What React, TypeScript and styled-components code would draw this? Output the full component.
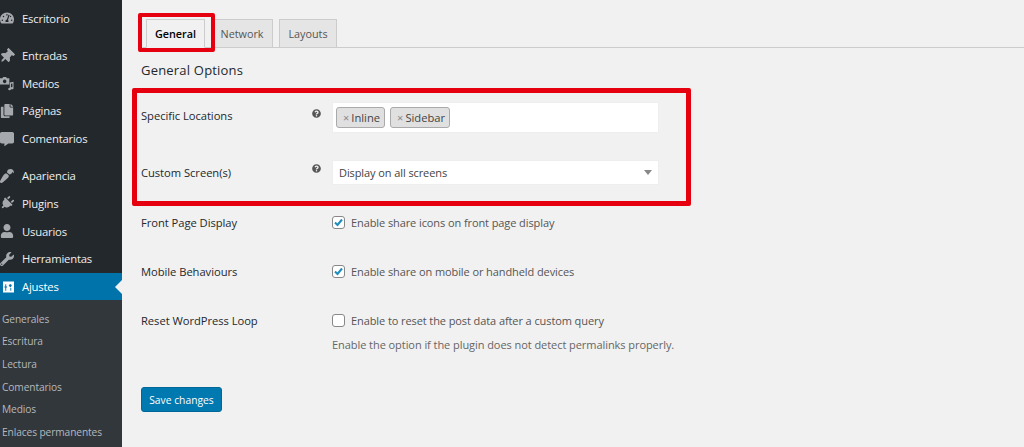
import React from "react";
import styled, { createGlobalStyle } from "styled-components";
import {
  FaTachometerAlt,
  FaThumbtack,
  FaCopy,
  FaCommentAlt,
  FaPaintBrush,
  FaPlug,
  FaUser,
  FaWrench,
  FaQuestionCircle,
} from "react-icons/fa";

const GlobalStyle = createGlobalStyle`
  html, body {
    margin: 0;
    padding: 0;
    height: 100%;
    overflow: hidden;
    background: #f1f1f1;
    font-family: "Open Sans", "Noto Sans", "Liberation Sans", sans-serif;
  }
`;

const Page = styled.div`
  display: flex;
  width: 1024px;
  height: 447px;
  overflow: hidden;
`;

const Sidebar = styled.nav`
  width: 122px;
  flex: none;
  background: #23282d;
  padding-top: 4.5px;
  box-sizing: border-box;
`;

const MenuGroup = styled.div`
  margin-bottom: 9.5px;
`;

const MenuItem = styled.div<{ $active?: boolean }>`
  position: relative;
  display: flex;
  align-items: center;
  height: 27.7px;
  padding-left: 22px;
  font-size: 11.3px;
  letter-spacing: -0.2px;
  color: ${(p) => (p.$active ? "#ffffff" : "#eeeeee")};
  background: ${(p) => (p.$active ? "#0073aa" : "transparent")};

  ${(p) =>
    p.$active &&
    `
    &::after {
      content: "";
      position: absolute;
      right: 0;
      top: 50%;
      margin-top: -7px;
      border: 7px solid transparent;
      border-right-color: #f1f1f1;
      border-left-width: 0;
    }
  `}
`;

const IconSlot = styled.span<{ $active?: boolean; $turn?: number; $size?: number }>`
  position: absolute;
  left: 0;
  top: 50%;
  width: 14px;
  height: 14px;
  margin-top: -7px;
  display: flex;
  align-items: center;
  justify-content: center;
  font-size: ${(p) => p.$size ?? 14}px;
  color: ${(p) => (p.$active ? "#ffffff" : "#a5a9ad")};
  transform: rotate(${(p) => p.$turn ?? 0}deg);
`;

const SubMenu = styled.div`
  background: #32373c;
  margin-top: 0;
  padding-top: 7px;
  height: 160px;
`;

const SubItem = styled.div`
  height: 22.7px;
  display: flex;
  align-items: center;
  padding-left: 2px;
  font-size: 10.2px;
  letter-spacing: -0.1px;
  color: #b4b9be;
`;

const Main = styled.main`
  flex: 1;
  padding: 18px 0 0 19px;
  color: #23282d;
  font-size: 11px;
`;

const TabBar = styled.div`
  position: relative;
  display: flex;
  align-items: flex-end;
  gap: 6px;
  height: 29px;
  padding-left: 5px;
  border-bottom: 1px solid #ccc;
`;

const Tab = styled.div<{ $active?: boolean; $width: number }>`
  height: 29px;
  margin-bottom: -1px;
  width: ${(p) => p.$width}px;
  box-sizing: border-box;
  display: flex;
  align-items: center;
  justify-content: center;
  font-size: 10.8px;
  font-weight: ${(p) => (p.$active ? 600 : 500)};
  color: ${(p) => (p.$active ? "#000" : "#555")};
  background: ${(p) => (p.$active ? "#f1f1f1" : "#e5e5e5")};
  border: 1px solid #ccc;
  border-bottom-color: ${(p) => (p.$active ? "#f1f1f1" : "#ccc")};
`;

const TabHighlight = styled.div`
  position: absolute;
  z-index: 1;
  left: -3px;
  top: -5px;
  width: 77px;
  height: 39px;
  box-sizing: border-box;
  border: 4px solid #e6000f;
  border-radius: 2px;
  pointer-events: none;
`;

const SectionHighlight = styled.div`
  position: absolute;
  inset: -14px -32px -21px -9px;
  border: 5px solid #e6000f;
  border-radius: 2px;
  pointer-events: none;
`;

const Heading = styled.h2`
  margin: 12.5px 0 0;
  height: 18px;
  line-height: 18px;
  font-size: 13px;
  font-weight: 500;
  letter-spacing: 0.2px;
  color: #23282d;
`;

const Highlighted = styled.section`
  position: relative;
  margin-top: 23.5px;
  width: 518px;
`;

const Row = styled.div<{ $height: number; $top?: number }>`
  display: grid;
  grid-template-columns: 171px 20px 327px;
  align-items: center;
  height: ${(p) => p.$height}px;
  margin-top: ${(p) => p.$top ?? 0}px;
`;

const Label = styled.div<{ $raised?: boolean }>`
  font-size: 11.2px;
  font-weight: 500;
  letter-spacing: -0.04px;
  color: #23282d;
  margin-top: ${(p) => (p.$raised ? "-5px" : "0")};
`;

const Help = styled.span`
  display: flex;
  font-size: 9px;
  color: #555;
  margin: -8px 0 0 0;
`;

const TagInput = styled.div`
  grid-column: 3;
  height: 31px;
  box-sizing: border-box;
  display: flex;
  align-items: center;
  gap: 5px;
  padding: 0 3px;
  background: #fff;
  border: 1px solid #eee;
`;

const Tag = styled.span`
  height: 21px;
  box-sizing: border-box;
  display: flex;
  align-items: center;
  padding: 0 4px 0 6px;
  gap: 2px;
  background: #e0e0e0;
  border: 1px solid #aaa;
  border-radius: 3px;
  font-size: 11.2px;
  color: #444;
`;

const TagX = styled.span`
  color: #888;
  font-size: 11px;
`;

const Select = styled.div`
  grid-column: 3;
  height: 25px;
  box-sizing: border-box;
  display: flex;
  align-items: center;
  justify-content: space-between;
  padding: 0 6px;
  background: #fff;
  border: 1px solid #eee;
  font-size: 11px;
  letter-spacing: -0.09px;
  color: #444;
`;

const Caret = styled.span`
  width: 0;
  height: 0;
  border: 4px solid transparent;
  border-top: 5px solid #888;
  border-bottom: 0;
`;

const CheckField = styled.div`
  grid-column: 3;
  display: flex;
  align-items: center;
  gap: 6px;
  font-size: 11px;
  letter-spacing: -0.09px;
  color: #555;
`;

const CheckBox = styled.span`
  width: 13px;
  height: 13px;
  box-sizing: border-box;
  flex: none;
  display: flex;
  align-items: center;
  justify-content: center;
  background: #fff;
  border: 1px solid #888;
  border-radius: 3px;
`;

const Description = styled.p`
  margin: 8px 0 0 191px;
  font-size: 11px;
  letter-spacing: -0.06px;
  line-height: 15px;
  color: #666;
`;

const SaveButton = styled.button`
  display: block;
  width: 81px;
  height: 25px;
  margin-top: 35px;
  padding: 0;
  background: #0078b0;
  border: 1px solid #006799;
  border-radius: 3px;
  color: #fff;
  font-family: inherit;
  font-size: 10.3px;
  font-weight: 500;
`;

const MediaIcon = () => (
  <svg width="16" height="15" viewBox="0 0 15 14" fill="currentColor">
    <path fillRule="evenodd" d="M0 1.500h2.500L3.500 0h3l1 1.500H10V8H0z M5 2.800a1.900 1.900 0 1 0 .01 0z" />
    <path d="M10.500 6l4-1v7a1.500 1.300 0 1 1-1.200-1.300V7l-1.500.4V13a1.500 1.300 0 1 1-1.300-1.300z" />
  </svg>
);

const SettingsIcon = () => (
  <svg width="12" height="12" viewBox="0 0 12 12" fill="currentColor" style={{ marginLeft: 3 }}>
    <path
      fillRule="evenodd"
      d="M0 0h12v12H0z M1.500 6.500h1V10h1V6.500h1v-1h-1V3h-1v2.500h-1z M7 3v1H6l2 2.500L10 4H9V3z M8 7v3h1V7z"
    />
  </svg>
);

const Check = () => (
  <svg width="11" height="11" viewBox="0 0 11 11">
    <path d="M2 5.500l2.500 2.500L9 2.500" fill="none" stroke="#1e8cbe" strokeWidth="2" />
  </svg>
);

function Item({ icon, label, turn, size, active }: any) {
  return (
    <MenuItem $active={active}>
      <IconSlot $active={active} $turn={turn} $size={size}>
        {icon}
      </IconSlot>
      {label}
    </MenuItem>
  );
}

export default function App() {
  return (
    <Page>
      <GlobalStyle />
      <Sidebar>
        <MenuGroup>
          <Item icon={<FaTachometerAlt />} label="Escritorio" />
        </MenuGroup>
        <MenuGroup>
          <Item icon={<FaThumbtack />} label="Entradas" turn={45} size={15} />
          <Item icon={<MediaIcon />} label="Medios" />
          <Item icon={<FaCopy />} label="Páginas" />
          <Item icon={<FaCommentAlt />} label="Comentarios" />
        </MenuGroup>
        <Item icon={<FaPaintBrush />} label="Apariencia" turn={180} />
        <Item icon={<FaPlug />} label="Plugins" turn={45} />
        <Item icon={<FaUser />} label="Usuarios" />
        <Item icon={<FaWrench />} label="Herramientas" />
        <Item icon={<SettingsIcon />} label="Ajustes" active />
        <SubMenu>
          {["Generales", "Escritura", "Lectura", "Comentarios", "Medios", "Enlaces permanentes"].map((s) => (
            <SubItem key={s}>{s}</SubItem>
          ))}
        </SubMenu>
      </Sidebar>
      <Main>
        <TabBar>
          <Tab $active $width={59}>
            General
          </Tab>
          <Tab $width={62}>Network</Tab>
          <Tab $width={58}>Layouts</Tab>
          <TabHighlight />
        </TabBar>
        <Heading>General Options</Heading>
        <Highlighted>
          <SectionHighlight />
          <Row $height={31}>
            <Label $raised>Specific Locations</Label>
            <Help>
              <FaQuestionCircle />
            </Help>
            <TagInput>
              <Tag>
                <TagX>×</TagX>Inline
              </Tag>
              <Tag>
                <TagX>×</TagX>Sidebar
              </Tag>
            </TagInput>
          </Row>
          <Row $height={25} $top={27}>
            <Label>Custom Screen(s)</Label>
            <Help>
              <FaQuestionCircle />
            </Help>
            <Select>
              Display on all screens
              <Caret />
            </Select>
          </Row>
        </Highlighted>
        <Row $height={18} $top={28}>
          <Label>Front Page Display</Label>
          <span />
          <CheckField>
            <CheckBox>
              <Check />
            </CheckBox>
            Enable share icons on front page display
          </CheckField>
        </Row>
        <Row $height={18} $top={31}>
          <Label>Mobile Behaviours</Label>
          <span />
          <CheckField>
            <CheckBox>
              <Check />
            </CheckBox>
            Enable share on mobile or handheld devices
          </CheckField>
        </Row>
        <Row $height={18} $top={31}>
          <Label>Reset WordPress Loop</Label>
          <span />
          <CheckField>
            <CheckBox />
            Enable to reset the post data after a custom query
          </CheckField>
        </Row>
        <Description>Enable the option if the plugin does not detect permalinks properly.</Description>
        <SaveButton>Save changes</SaveButton>
      </Main>
    </Page>
  );
}
